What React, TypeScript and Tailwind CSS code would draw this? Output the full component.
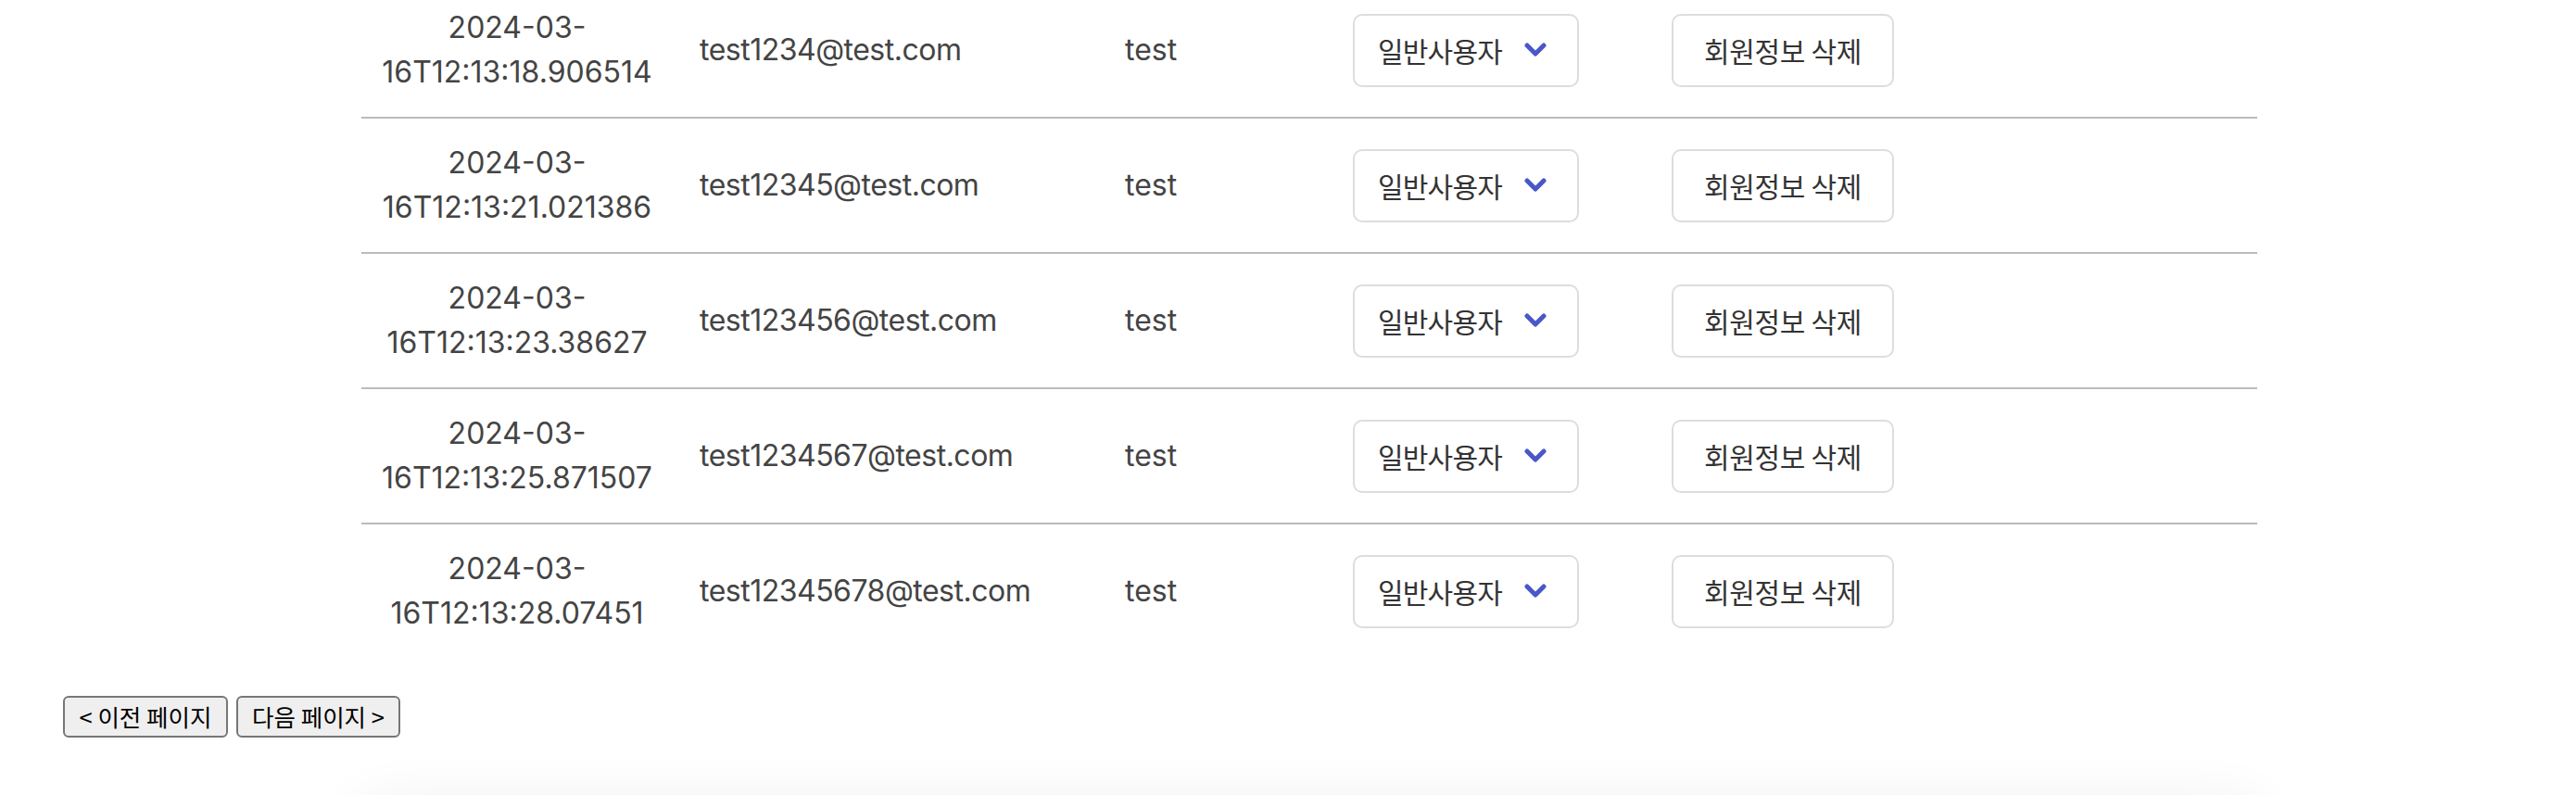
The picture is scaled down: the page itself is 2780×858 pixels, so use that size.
import React from 'react';

interface Member {
  createdAt: string;
  email: string;
  name: string;
}

const members: Member[] = [
  { createdAt: '2024-03-16T12:13:18.906514', email: 'test1234@test.com', name: 'test' },
  { createdAt: '2024-03-16T12:13:21.021386', email: 'test12345@test.com', name: 'test' },
  { createdAt: '2024-03-16T12:13:23.38627', email: 'test123456@test.com', name: 'test' },
  { createdAt: '2024-03-16T12:13:25.871507', email: 'test1234567@test.com', name: 'test' },
  { createdAt: '2024-03-16T12:13:28.07451', email: 'test12345678@test.com', name: 'test' },
];

const ChevronDown = () => (
  <svg width="24" height="16" viewBox="0 0 24 16" fill="none">
    <polyline points="3,3 12,12 21,3" stroke="#4a57c8" strokeWidth="5" strokeLinecap="round" strokeLinejoin="round" />
  </svg>
);

const App: React.FC = () => {
  return (
    <div className="w-full h-[858px] overflow-hidden bg-white font-['Inter','Noto_Sans_CJK_KR',sans-serif] text-[#444]">
      {/* Member table */}
      <div className="ml-[390px] w-[2046px] -mt-[18px]">
        {members.map((m, i) => (
          <div
            key={m.email}
            className={`grid grid-cols-[336px_488px_246px_344px_1fr] items-center py-6 ${i < members.length - 1 ? 'border-b-2 border-[#bbbbbb]' : ''}`}
          >
            <div className="text-center text-[32px] leading-[48px]">{m.createdAt}</div>
            <div className="pl-[29px] text-[32px] leading-[48px] tracking-[-0.5px]">{m.email}</div>
            <div className="text-[32px] leading-[48px]">{m.name}</div>
            <div>
              <div className="flex items-center w-[244px] h-[79px] pl-[25px] border-2 border-[#dddddd] rounded-[10px] bg-white">
                <span className="text-[30px] text-[#333] font-['Noto_Sans_CJK_KR',sans-serif] tracking-[-0.8px]">일반사용자</span>
                <span className="ml-[24px] flex items-center">
                  <ChevronDown />
                </span>
              </div>
            </div>
            <div>
              <button className="w-[240px] h-[79px] border-2 border-[#dddddd] rounded-[10px] bg-white text-[30px] text-[#333] font-['Noto_Sans_CJK_KR',sans-serif] tracking-[-0.3px]">
                회원정보 삭제
              </button>
            </div>
          </div>
        ))}
      </div>

      {/* Pagination */}
      <div className="flex gap-[9px] ml-[68px] mt-[41px] font-['Noto_Sans_CJK_KR',sans-serif]">
        <button className="h-[45px] w-[178px] flex items-center justify-center bg-[#efefef] border-2 border-[#767676] rounded-[6px] text-[25.5px] text-black">
          &lt; 이전 페이지
        </button>
        <button className="h-[45px] w-[177px] flex items-center justify-center bg-[#efefef] border-2 border-[#767676] rounded-[6px] text-[25.5px] text-black">
          다음 페이지 &gt;
        </button>
      </div>

      {/* Footer card peeking in */}
      <div className="ml-[390px] w-[2046px] mt-[70px] h-[200px] rounded-[20px] bg-white shadow-[0_0_60px_rgba(0,0,0,0.07)]" />
    </div>
  );
};

export default App;
